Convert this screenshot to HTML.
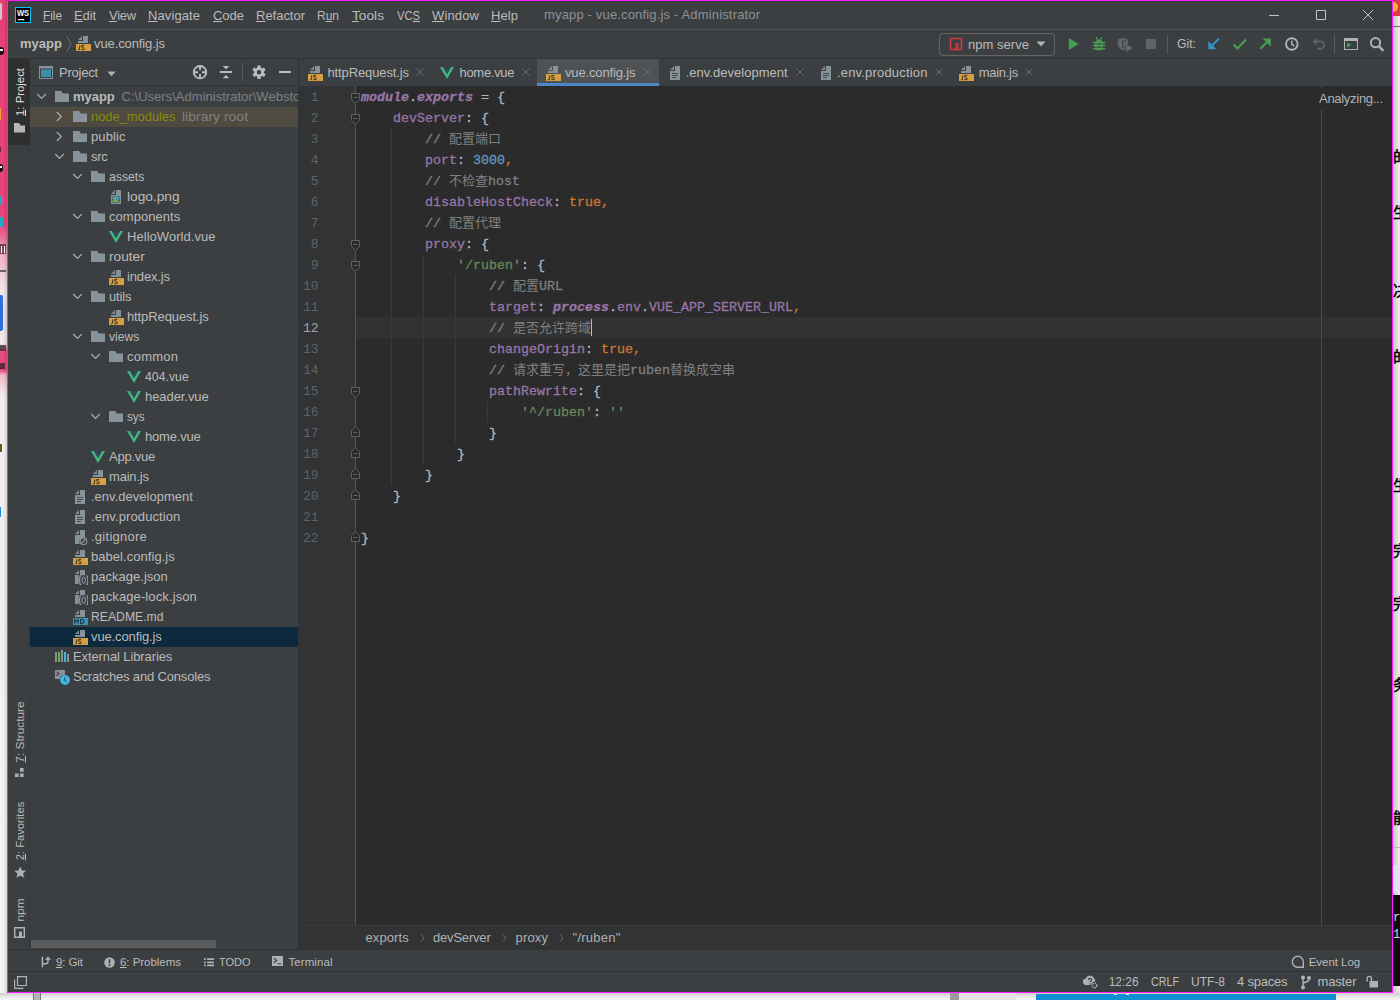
<!DOCTYPE html>
<html lang="en"><head><meta charset="utf-8"><title>myapp - vue.config.js - Administrator</title>
<style>

html,body{margin:0;padding:0}
body{width:1400px;height:1000px;overflow:hidden;position:relative;background:#fff;
 font-family:"Liberation Sans",sans-serif;font-size:13px;color:#bbb}
#win{position:absolute;left:0;top:0;width:1400px;height:1000px}
.r{position:absolute}
.i{position:absolute;overflow:visible}
.t{position:absolute;white-space:nowrap;line-height:16px;height:16px;color:#bbb}
.t u{text-decoration:underline;text-underline-offset:1px}
.code{position:absolute;white-space:pre;font-family:"Liberation Mono",monospace;font-size:13.33px;
 line-height:21px;height:21px;color:#a9b7c6;left:361px;-webkit-text-stroke:.3px}
.ln{position:absolute;left:298px;width:20.500px;text-align:right;font-family:"Liberation Mono",monospace;
 font-size:13px;line-height:21px;height:21px;color:#606366}
.p{color:#9876aa}.k{color:#cc7832}.n{color:#6897bb}.s{color:#6a8759}.c{color:#808080}
.g{color:#9876aa;font-style:italic;font-weight:bold}
.cj{display:inline-block;vertical-align:top;height:21px;line-height:21px;color:#808080;overflow:visible;
 font-family:"Liberation Mono","Noto Sans CJK SC",monospace;font-size:13px;-webkit-text-stroke:0}
</style></head>
<body>
<svg width="0" height="0" style="position:absolute"><defs>
<symbol id="f-txt" viewBox="0 0 16 16"><path fill="#87939a" d="M8 1h5v14h-10v-9h5z"/><path fill="#87939a" opacity=".9" d="M7 1v4h-4z"/><path stroke="#3c3f41" stroke-width="1" opacity=".85" d="M5 8.5h6M5 10.5h6M5 12.5h4"/></symbol>
<symbol id="f-js" viewBox="0 0 16 16"><path fill="#87939a" d="M8 1h5v7h-10v-2h5z"/><path fill="#87939a" opacity=".9" d="M7 1v4h-4z"/><rect x="1" y="9" width="15" height="7" fill="#d6a042"/><path fill="none" stroke="#4a3c1f" stroke-width="1.1" d="M4.6 10.4v3.2q0 1.1-1.1 1.1h-.7M9.2 10.9q-.5-.5-1.4-.5-1.3 0-1.3.95 0 .8 1.3 1.1 1.4.3 1.4 1.2 0 1-1.4 1-1 0-1.5-.6"/></symbol>
<symbol id="f-md" viewBox="0 0 16 16"><path fill="#87939a" d="M8 1h5v7h-10v-2h5z"/><path fill="#87939a" opacity=".9" d="M7 1v4h-4z"/><rect x="1" y="9" width="15" height="7" fill="#3e93b8"/><path fill="none" stroke="#1d3a48" stroke-width="1.1" d="M2.7 14.7v-4.2l1.7 2.4 1.7-2.4v4.2M8.6 10.5v4.2h1.2q2 0 2-2.1t-2-2.1z"/></symbol>
<symbol id="f-json" viewBox="0 0 16 16"><path fill="#87939a" d="M8 1h5v5.200h-6.300v8.800h-3.700v-9h5z"/><path fill="#87939a" opacity=".9" d="M7 1v4h-4z"/><path fill="none" stroke="#98a3aa" stroke-width="1.100" d="M9.200 6.800q-1.400 0-1.400 1.300v1.700q0 1.300-1 1.400 1 .1 1 1.400v1.700q0 1.300 1.400 1.300M14.300 6.800q1.400 0 1.400 1.300v1.700q0 1.300 1 1.400-1 .1-1 1.400v1.700q0 1.300-1.400 1.300"/><ellipse cx="11.750" cy="11.200" rx="1.700" ry="3.300" fill="none" stroke="#98a3aa" stroke-width="1"/></symbol>
<symbol id="f-ign" viewBox="0 0 16 16"><path fill="#87939a" d="M8 1h5v8.200a4 4 0 0 0-5 5.800h-5v-9h5z"/><path fill="#87939a" opacity=".9" d="M7 1v4h-4z"/><circle cx="11.500" cy="12.200" r="3.300" fill="none" stroke="#87939a" stroke-width="1.1"/><path stroke="#87939a" stroke-width="1.1" d="M9.300 14.400l4.400-4.400"/></symbol>
<symbol id="f-img" viewBox="0 0 16 16"><path fill="#87939a" d="M8 1h5v14h-10v-9h5z"/><path fill="#87939a" opacity=".9" d="M7 1v4h-4z"/><rect x="4.5" y="7.5" width="7" height="6" fill="#3c3f41"/><rect x="5" y="8" width="6" height="2.6" fill="#40a8d0"/><path fill="#62b543" d="M5 13v-2l2-1.2 4 2.2v1z"/></symbol>
<symbol id="f-vue" viewBox="0 0 16 16"><path fill="#41b883" d="M1 3h2.9l4.1 7.1 4.1-7.1h2.9l-7 12z"/><path fill="#35495e" d="M3.9 3h2.4l1.7 3 1.7-3h2.4l-4.1 7.1z"/></symbol>
<symbol id="folder" viewBox="0 0 16 16"><path fill="#87939a" d="M1 3h6.2l1.6 2.6h6.2v8.400h-14z"/></symbol>
<symbol id="libs" viewBox="0 0 16 16"><path fill="#87939a" d="M1 3h2v10h-2zM7 1h2v12h-2zM13 5h2v8h-2z"/><path fill="#62b543" d="M4 3h2v10h-2z"/><path fill="#40b6e0" d="M10 3h2v10h-2z"/></symbol>
<symbol id="scratch" viewBox="0 0 16 16"><path fill="#87939a" d="M1 1h10v4.800a5.300 5.300 0 0 0-5.200 4.200h-4.800z"/><path fill="none" stroke="#3c3f41" stroke-width="1.100" d="M2.500 2.700l2.500 2-2.500 2"/><circle cx="11" cy="11" r="4.900" fill="#40b6e0"/><path fill="none" stroke="#2b4a5a" stroke-width="1.200" d="M10.800 8.500v2.600l1.600 1.500"/></symbol>
<symbol id="ch-d" viewBox="0 0 16 16"><path fill="none" stroke="#adadad" stroke-width="1.2" d="M3.200 6l4.300 4.300 4.300-4.300"/></symbol>
<symbol id="ch-r" viewBox="0 0 16 16"><path fill="none" stroke="#adadad" stroke-width="1.2" d="M4.800 4l4.500 4.500-4.500 4.500"/></symbol>
</defs></svg>
<!-- desktop peeking out behind the IDE window -->
<div class="r" style="left:0px;top:0px;width:7px;height:1000px;background:#f3f3f3;background:linear-gradient(90deg,rgba(0,0,0,0) 45%,rgba(0,0,0,.12) 100%),linear-gradient(180deg,#ea3f79 0,#e8457d 225px,#ec7aa0 240px,#f2b4c8 256px,#f1e6ea 290px,#f1e6ea 344px,#e84a80 352px,#e84a80 370px,#f0b8c8 375px,#f2eeee 396px,#f3f3f3 100%)"></div>
<div class="r" style="left:0px;top:3px;width:2px;height:17px;background:#cfc8cb;border-radius:0 2px 2px 0"></div>
<div class="r" style="left:0px;top:47px;width:4px;height:8px;background:#1c1014;border-radius:0 3px 3px 0"></div>
<div class="r" style="left:0px;top:49px;width:3px;height:2px;background:#f4ecee;"></div>
<div class="r" style="left:0px;top:164px;width:3px;height:8px;background:#1c1014;border-radius:0 3px 3px 0"></div>
<div class="r" style="left:0px;top:166px;width:2px;height:2px;background:#f4ecee;"></div>
<div class="r" style="left:0px;top:108px;width:1px;height:12px;background:#f2a02c;"></div>
<div class="r" style="left:0px;top:147px;width:1px;height:5px;background:#7a2848;"></div>
<div class="r" style="left:0px;top:196px;width:2px;height:9px;background:#28a8c4;"></div>
<div class="r" style="left:0px;top:217px;width:3px;height:10px;background:#28a8c4;"></div>
<div class="r" style="left:0px;top:244px;width:6px;height:10px;background:#2a1a20;opacity:.65"></div>
<div class="r" style="left:1px;top:246px;width:1px;height:7px;background:#fff;"></div>
<div class="r" style="left:4px;top:246px;width:1px;height:7px;background:#fff;"></div>
<div class="r" style="left:0px;top:270px;width:6px;height:2px;background:#3a3036;opacity:.7"></div>
<div class="r" style="left:0px;top:295px;width:3px;height:36px;background:#2f6fe0;border-radius:0 2px 2px 0"></div>
<div class="r" style="left:0px;top:345px;width:6px;height:6px;background:#2a2024;opacity:.7"></div>
<div class="r" style="left:0px;top:363px;width:5px;height:6px;background:#2a1a20;opacity:.7"></div>
<div class="r" style="left:0px;top:444px;width:2px;height:8px;background:#6a5420;"></div>
<div class="r" style="left:0px;top:507px;width:1px;height:10px;background:#1a8fd8;"></div>
<div class="r" style="left:1393px;top:0px;width:7px;height:1000px;background:#e6e6e6;background:linear-gradient(90deg,#c6c6c6,#efefef)"></div>
<div class="r" style="left:1393px;top:0px;width:7px;height:16px;background:#e1344b;"></div>
<div class="r" style="left:1393px;top:2px;width:5px;height:10px;background:#f0b428;border-radius:0 5px 5px 0"></div>
<div class="r" style="left:1393px;top:26px;width:7px;height:1px;background:#6e6e6e;"></div>
<svg class="i" style="left:1393px;top:149px;overflow:hidden" width="7" height="16" viewBox="0 0 7 16" fill="#000" stroke="#000" stroke-width="0.5"><text x="0" y="13.200" font-size="15" font-family="'Liberation Sans','Noto Sans CJK SC',sans-serif">的</text></svg>
<svg class="i" style="left:1393px;top:205px;overflow:hidden" width="7" height="16" viewBox="0 0 7 16" fill="#000" stroke="#000" stroke-width="0.5"><text x="0" y="13.200" font-size="15" font-family="'Liberation Sans','Noto Sans CJK SC',sans-serif">生</text></svg>
<svg class="i" style="left:1393px;top:283px;overflow:hidden" width="7" height="16" viewBox="0 0 7 16" fill="#000" stroke="#000" stroke-width="0.5"><text x="0" y="13.200" font-size="15" font-family="'Liberation Sans','Noto Sans CJK SC',sans-serif">决</text></svg>
<svg class="i" style="left:1393px;top:349px;overflow:hidden" width="7" height="16" viewBox="0 0 7 16" fill="#000" stroke="#000" stroke-width="0.5"><text x="0" y="13.200" font-size="15" font-family="'Liberation Sans','Noto Sans CJK SC',sans-serif">的</text></svg>
<svg class="i" style="left:1393px;top:478px;overflow:hidden" width="7" height="16" viewBox="0 0 7 16" fill="#000" stroke="#000" stroke-width="0.5"><text x="0" y="13.200" font-size="15" font-family="'Liberation Sans','Noto Sans CJK SC',sans-serif">生</text></svg>
<svg class="i" style="left:1393px;top:543px;overflow:hidden" width="7" height="16" viewBox="0 0 7 16" fill="#000" stroke="#000" stroke-width="0.5"><text x="0" y="13.200" font-size="15" font-family="'Liberation Sans','Noto Sans CJK SC',sans-serif">完</text></svg>
<svg class="i" style="left:1393px;top:596px;overflow:hidden" width="7" height="16" viewBox="0 0 7 16" fill="#000" stroke="#000" stroke-width="0.5"><text x="0" y="13.200" font-size="15" font-family="'Liberation Sans','Noto Sans CJK SC',sans-serif">完</text></svg>
<svg class="i" style="left:1393px;top:677px;overflow:hidden" width="7" height="16" viewBox="0 0 7 16" fill="#000" stroke="#000" stroke-width="0.5"><text x="0" y="13.200" font-size="15" font-family="'Liberation Sans','Noto Sans CJK SC',sans-serif">务</text></svg>
<svg class="i" style="left:1393px;top:810px;overflow:hidden" width="7" height="16" viewBox="0 0 7 16" fill="#000" stroke="#000" stroke-width="0.5"><text x="0" y="13.200" font-size="15" font-family="'Liberation Sans','Noto Sans CJK SC',sans-serif">能</text></svg>
<div class="r" style="left:1393px;top:847px;width:7px;height:1px;background:#b8b8b8;"></div>
<div class="r" style="left:1393px;top:865px;width:7px;height:27px;background:#dfe3f4;"></div>
<div class="r" style="left:1393px;top:895px;width:7px;height:91px;background:#0c0c0c;"></div>
<div class="t" style="left:1393px;top:910px;width:7px;overflow:hidden;color:#d8d8d8;font-family:'Liberation Mono',monospace;font-size:12px">ra</div>
<div class="t" style="left:1393px;top:927px;width:7px;overflow:hidden;color:#d8d8d8;font-family:'Liberation Mono',monospace;font-size:12px">10</div>
<div class="r" style="left:0px;top:993px;width:1400px;height:7px;background:#f2f2f2;background:linear-gradient(180deg,#cfcfcf,#f4f4f4 85%)"></div>
<div class="r" style="left:33px;top:993px;width:8px;height:7px;background:#b4b4bc;border-left:1px solid #777;border-right:1px solid #777;box-sizing:border-box"></div>
<div class="r" style="left:950px;top:993px;width:9px;height:7px;background:#9c9c9c;"></div>
<div class="r" style="left:959px;top:993px;width:57px;height:7px;background:#e2e2e6;"></div>
<div class="r" style="left:1036px;top:994px;width:300px;height:6px;background:#0f90d3;"></div>
<div class="r" style="left:1114px;top:994px;width:3px;height:1px;background:#e8f4fb;"></div>
<div class="r" style="left:1126px;top:994px;width:3px;height:1px;background:#e8f4fb;"></div>
<div class="r" style="left:7px;top:0px;width:1386px;height:993px;background:#3c3f41;border:1px solid #ff19ff;box-sizing:border-box"></div>
<div id="win">
<!-- title / menu bar -->
<svg class="i" style="left:15px;top:7px" width="16" height="16" viewBox="0 0 16 16"><rect x=".5" y=".5" width="15" height="15" fill="#000" stroke="#08c3f2"/><text x="1.900" y="9.200" font-family="Liberation Sans,sans-serif" font-weight="bold" font-size="8.800" textLength="12.200" lengthAdjust="spacingAndGlyphs" fill="#fff">WS</text><path fill="#fff" d="M2.900 11.900h6.300v1.300h-6.300z"/></svg>
<div class="t" style="left:43px;top:7.5px;transform:scaleX(0.907);transform-origin:0 50%;"><u>F</u>ile</div>
<div class="t" style="left:74px;top:7.5px;letter-spacing:-0.13px;"><u>E</u>dit</div>
<div class="t" style="left:109px;top:7.5px;letter-spacing:-0.31px;"><u>V</u>iew</div>
<div class="t" style="left:148px;top:7.5px;letter-spacing:0.10px;"><u>N</u>avigate</div>
<div class="t" style="left:213px;top:7.5px;letter-spacing:-0.03px;"><u>C</u>ode</div>
<div class="t" style="left:256px;top:7.5px;letter-spacing:-0.02px;"><u>R</u>efactor</div>
<div class="t" style="left:317px;top:7.5px;transform:scaleX(0.922);transform-origin:0 50%;">R<u>u</u>n</div>
<div class="t" style="left:352px;top:7.5px;transform:scaleX(1.054);transform-origin:0 50%;"><u>T</u>ools</div>
<div class="t" style="left:397px;top:7.5px;transform:scaleX(0.860);transform-origin:0 50%;">VC<u>S</u></div>
<div class="t" style="left:432px;top:7.5px;letter-spacing:0.15px;"><u>W</u>indow</div>
<div class="t" style="left:491px;top:7.5px;letter-spacing:0.09px;"><u>H</u>elp</div>
<div class="t" style="left:544px;top:7px;color:#8f9193;letter-spacing:0.16px;">myapp - vue.config.js - Administrator</div>
<svg class="i" style="left:1262px;top:4px" width="120" height="22" viewBox="0 0 120 22" fill="none" stroke="#c4c4c4" stroke-width="1"><path d="M7 11.500h10M54.500 6.500h9v9h-9zM101 6l10 10M111 6l-10 10"/></svg>
<div class="r" style="left:8px;top:29px;width:1384px;height:1px;background:#515456;"></div>
<!-- navigation bar + main toolbar -->
<div class="t" style="left:20px;top:36px;font-weight:bold;letter-spacing:0.02px;">myapp</div>
<svg class="i" style="left:65px;top:35px" width="8" height="18" viewBox="0 0 8 18" fill="none" stroke="#6b6e70" stroke-width="1"><path d="M1.500 1l4.500 8-4.500 8"/></svg>
<svg class="i" style="left:75px;top:35px;" width="16" height="16"><use href="#f-js"/></svg>
<div class="t" style="left:94px;top:36px;letter-spacing:-0.11px;">vue.config.js</div>
<div class="r" style="left:939px;top:33px;width:116px;height:23px;background:transparent;border:1px solid #646464;border-radius:4px;box-sizing:border-box"></div>
<svg class="i" style="left:949px;top:37px" width="14" height="14" viewBox="0 0 14 14"><path fill="none" stroke="#d8373f" stroke-width="1.600" d="M1.500 1.500h11v11h-11z"/><path fill="#d8373f" d="M6.500 6h3v7h-3z" opacity=".9"/></svg>
<div class="t" style="left:968px;top:37px;letter-spacing:0.04px;">npm serve</div>
<svg class="i" style="left:1036px;top:41px" width="10" height="6" viewBox="0 0 10 6"><path fill="#b4b4b4" d="M.5.500h9l-4.500 5z"/></svg>
<svg class="i" style="left:1064px;top:36px" width="100" height="17" viewBox="0 0 100 17"><path fill="#499c54" d="M4.800 2l9.800 6-9.800 6z"/><g fill="#499c54" stroke="#499c54"><rect x="31.200" y="3.800" width="7.600" height="10.800" rx="3.800" stroke="none"/><path stroke-width="1.500" d="M28.800 6.400h12.400M28.800 9.600h12.400M28.800 12.800h12.400"/><path stroke-width="1.300" fill="none" d="M32 1.300l2 2.500M38 1.300l-2 2.500"/></g><path stroke="#3c3f41" stroke-width="1" d="M32.400 8h5.200M32.400 11.200h5.200"/><path fill="#636567" d="M53.700 3.500l5.200-1.700 5.100 1.700v4.200l-2.800 1.600v3.800l-2.300 1.400q-5.200-2.400-5.200-7.700z"/><path fill="none" stroke="#3c3f41" stroke-width="1.200" d="M62 4.900h-1.600q-1.700 0-1.700 1.700v3.300q0 1.700 1.300 1.700"/><path fill="#636567" d="M62 8l7 4-7 4z"/><rect x="82" y="3" width="10" height="10" fill="#606264"/></svg>
<div class="r" style="left:1167px;top:35px;width:1px;height:19px;background:#5a5d5f;"></div>
<div class="t" style="left:1177px;top:35.5px;transform:scaleX(0.939);transform-origin:0 50%;">Git:</div>
<svg class="i" style="left:1206px;top:36px" width="122" height="16" viewBox="0 0 122 16" fill="none" stroke-width="2"><path stroke="#3592c4" d="M12.800 2.800l-7.500 7.500"/><path fill="#3592c4" d="M2.300 13.200v-8.200l8.200 8.200z"/><path stroke="#499c54" stroke-width="2.200" d="M27.500 8.500l4 4 8.500-9"/><path stroke="#499c54" d="M54.300 12.800l7.500-7.500"/><path fill="#499c54" d="M64.800 2.400v8.200l-8.200-8.200z"/><circle cx="85.800" cy="8" r="5.800" stroke="#afb1b3" stroke-width="1.900"/><path stroke="#afb1b3" stroke-width="1.500" d="M85.800 4.500v3.800l2.600 1.700"/><path stroke="#5f6163" stroke-width="1.900" d="M108.500 5.500h6a3.600 3.600 0 0 1 0 7.200h-3.500"/><path fill="#5f6163" d="M106.300 5.500l4.500-4v8z"/></svg>
<div class="r" style="left:1334px;top:35px;width:1px;height:19px;background:#5a5d5f;"></div>
<svg class="i" style="left:1343px;top:36px" width="16" height="16" viewBox="0 0 16 16"><path fill="#afb1b3" d="M1 2h14v12h-14zM2 5v8h12v-8z" fill-rule="evenodd"/><path fill="#499c54" d="M4 6.200l4.500 2.800-4.500 2.800z"/></svg>
<svg class="i" style="left:1368px;top:35px" width="18" height="18" viewBox="0 0 18 18" fill="none" stroke="#afb1b3"><circle cx="7.500" cy="7.700" r="4.600" stroke-width="2"/><path stroke-width="2.400" d="M10.800 11.200l4.600 4.600"/></svg>
<div class="r" style="left:8px;top:58px;width:1384px;height:1px;background:#323232;"></div>
<!-- left tool-window stripe -->
<div class="r" style="left:8px;top:59px;width:22px;height:890px;background:#3c3f41;"></div>
<div class="r" style="left:8px;top:59px;width:22px;height:86px;background:#2d2f30;"></div>
<div class="r" style="left:29px;top:145px;width:1px;height:804px;background:#36383a;"></div>
<div class="t" style="left:20px;top:92px;width:0;height:0;overflow:visible;font-size:11.500px;color:#e0e0e0"><div style="position:absolute;transform:translate(-50%,-50%) rotate(-90deg) scaleX(0.988);white-space:nowrap;line-height:16px"><u>1</u>: Project</div></div>
<svg class="i" style="left:14px;top:123px" width="11" height="9.500" viewBox="0 0 11 9.500"><path fill="#b4b6b8" d="M0 0h5l1.500 2.500h4.500v7h-11z"/></svg>
<div class="t" style="left:20px;top:731.5px;width:0;height:0;overflow:visible;font-size:11.500px;color:#bbb"><div style="position:absolute;transform:translate(-50%,-50%) rotate(-90deg) scaleX(1.031);white-space:nowrap;line-height:16px"><u>7</u>: Structure</div></div>
<svg class="i" style="left:15px;top:767.500px" width="10" height="10" viewBox="0 0 11 11" fill="#afb1b3"><path d="M5.500 0h4v4h-4zM0 6h4v4h-4zM5.500 6h4v4h-4z"/></svg>
<div class="t" style="left:20px;top:831px;width:0;height:0;overflow:visible;font-size:11.500px;color:#bbb"><div style="position:absolute;transform:translate(-50%,-50%) rotate(-90deg) scaleX(0.974);white-space:nowrap;line-height:16px"><u>2</u>: Favorites</div></div>
<svg class="i" style="left:13.500px;top:865.500px" width="12.500" height="12.500" viewBox="0 0 14 14"><path fill="#afb1b3" d="M7 .5l2 4.500 4.700.4-3.600 3.100 1.100 4.700-4.200-2.500-4.200 2.500 1.100-4.700-3.600-3.100 4.700-.4z"/></svg>
<div class="t" style="left:20px;top:909.5px;width:0;height:0;overflow:visible;font-size:11.500px;color:#bbb"><div style="position:absolute;transform:translate(-50%,-50%) rotate(-90deg) scaleX(1.028);white-space:nowrap;line-height:16px">npm</div></div>
<svg class="i" style="left:14px;top:927px" width="11" height="11" viewBox="0 0 11 11"><path fill="none" stroke="#afb1b3" stroke-width="1.400" d="M.7.700h9.600v9.600h-9.600z"/><path fill="#afb1b3" d="M5 4.500h3v6h-3z"/></svg>
<!-- project tool window -->
<div class="r" style="left:30px;top:59px;width:268px;height:891px;background:#3c3f41;"></div>
<svg class="i" style="left:39px;top:66px" width="14" height="13" viewBox="0 0 14 13"><path fill="#87939a" d="M0 0h14v13h-14z"/><path fill="#3c3f41" d="M1 2.500h12v9.500h-12z"/><path fill="#3d8eae" d="M2 3.500h10v7.500h-10z"/></svg>
<div class="t" style="left:59px;top:65px;letter-spacing:-0.24px;">Project</div>
<svg class="i" style="left:107px;top:71px" width="9" height="6" viewBox="0 0 9 6"><path fill="#b4b4b4" d="M.3.500h8.400l-4.200 4.800z"/></svg>
<svg class="i" style="left:192px;top:64px" width="16" height="16" viewBox="0 0 16 16" fill="none" stroke="#b9bbbd" stroke-width="1.900"><circle cx="8" cy="8.200" r="6.200"/><path d="M8 2.500v3.800M8 10.100v3.800M2.300 8.200h3.800M9.900 8.200h3.800"/></svg>
<svg class="i" style="left:219px;top:64px" width="14" height="16" viewBox="0 0 14 16"><path fill="#b9bbbd" d="M.8 7h12.400v2h-12.400zM3.700 2h6.600l-3.300 3.300zM3.700 14.200h6.600l-3.300-3.300z"/></svg>
<div class="r" style="left:242px;top:62px;width:1px;height:20px;background:#555759;"></div>
<svg class="i" style="left:251px;top:64px" width="16" height="16" viewBox="0 0 16 16"><path fill="#b9bbbd" fill-rule="evenodd" d="M9.760 3.630L9.550 1.480L6.450 1.480L6.240 3.630L4.920 4.390L2.950 3.490L1.400 6.180L3.160 7.430L3.160 8.970L1.400 10.220L2.950 12.910L4.920 12.010L6.240 12.770L6.450 14.920L9.550 14.920L9.760 12.770L11.080 12.010L13.050 12.910L14.600 10.220L12.840 8.970L12.840 7.430L14.600 6.180L13.050 3.490L11.080 4.390zM10.200 8.200a2.200 2.200 0 1 0 -4.400 0a2.200 2.200 0 1 0 4.400 0z"/></svg>
<div class="r" style="left:279px;top:71px;width:12px;height:2px;background:#b9bbbd;"></div>
<div class="r" style="left:30px;top:85px;width:268px;height:1px;background:#323232;"></div>
<svg class="i" style="left:34px;top:88px;" width="16" height="16"><use href="#ch-d"/></svg>
<svg class="i" style="left:54px;top:88px;" width="16" height="16"><use href="#folder"/></svg>
<div class="t" style="left:73px;top:89px;font-weight:bold;letter-spacing:-0.03px;">myapp</div>
<div class="t" style="left:121.5px;top:89px;width:176px;overflow:hidden;color:#7e8183;letter-spacing:.02px">C:\Users\Administrator\WebstormProjects\myapp</div>
<div class="r" style="left:30px;top:107px;width:268px;height:20px;background:#4f4b41;"></div>
<svg class="i" style="left:52px;top:108px;" width="16" height="16"><use href="#ch-r"/></svg>
<svg class="i" style="left:72px;top:108px;" width="16" height="16"><use href="#folder"/></svg>
<div class="t" style="left:91px;top:109px;color:#878a0c;letter-spacing:-0.07px;">node_modules</div>
<div class="t" style="left:182px;top:109px;color:#7e8183;transform:scaleX(1.075);transform-origin:0 50%;">library root</div>
<svg class="i" style="left:52px;top:128px;" width="16" height="16"><use href="#ch-r"/></svg>
<svg class="i" style="left:72px;top:128px;" width="16" height="16"><use href="#folder"/></svg>
<div class="t" style="left:91px;top:129px;letter-spacing:0.11px;">public</div>
<svg class="i" style="left:52px;top:148px;" width="16" height="16"><use href="#ch-d"/></svg>
<svg class="i" style="left:72px;top:148px;" width="16" height="16"><use href="#folder"/></svg>
<div class="t" style="left:91px;top:149px;letter-spacing:-0.26px;">src</div>
<svg class="i" style="left:70px;top:168px;" width="16" height="16"><use href="#ch-d"/></svg>
<svg class="i" style="left:90px;top:168px;" width="16" height="16"><use href="#folder"/></svg>
<div class="t" style="left:109px;top:169px;transform:scaleX(0.940);transform-origin:0 50%;">assets</div>
<svg class="i" style="left:108px;top:189px;" width="16" height="16"><use href="#f-img"/></svg>
<div class="t" style="left:127px;top:189px;transform:scaleX(1.053);transform-origin:0 50%;">logo.png</div>
<svg class="i" style="left:70px;top:208px;" width="16" height="16"><use href="#ch-d"/></svg>
<svg class="i" style="left:90px;top:208px;" width="16" height="16"><use href="#folder"/></svg>
<div class="t" style="left:109px;top:209px;letter-spacing:0.05px;">components</div>
<svg class="i" style="left:108px;top:228px;" width="16" height="16"><use href="#f-vue"/></svg>
<div class="t" style="left:127px;top:229px;letter-spacing:0.05px;">HelloWorld.vue</div>
<svg class="i" style="left:70px;top:248px;" width="16" height="16"><use href="#ch-d"/></svg>
<svg class="i" style="left:90px;top:248px;" width="16" height="16"><use href="#folder"/></svg>
<div class="t" style="left:109px;top:249px;transform:scaleX(1.054);transform-origin:0 50%;">router</div>
<svg class="i" style="left:108px;top:269px;" width="16" height="16"><use href="#f-js"/></svg>
<div class="t" style="left:127px;top:269px;letter-spacing:-0.15px;">index.js</div>
<svg class="i" style="left:70px;top:288px;" width="16" height="16"><use href="#ch-d"/></svg>
<svg class="i" style="left:90px;top:288px;" width="16" height="16"><use href="#folder"/></svg>
<div class="t" style="left:109px;top:289px;letter-spacing:-0.15px;">utils</div>
<svg class="i" style="left:108px;top:309px;" width="16" height="16"><use href="#f-js"/></svg>
<div class="t" style="left:127px;top:309px;letter-spacing:-0.11px;">httpRequest.js</div>
<svg class="i" style="left:70px;top:328px;" width="16" height="16"><use href="#ch-d"/></svg>
<svg class="i" style="left:90px;top:328px;" width="16" height="16"><use href="#folder"/></svg>
<div class="t" style="left:109px;top:329px;transform:scaleX(0.932);transform-origin:0 50%;">views</div>
<svg class="i" style="left:88px;top:348px;" width="16" height="16"><use href="#ch-d"/></svg>
<svg class="i" style="left:108px;top:348px;" width="16" height="16"><use href="#folder"/></svg>
<div class="t" style="left:127px;top:349px;letter-spacing:0.23px;">common</div>
<svg class="i" style="left:126px;top:368px;" width="16" height="16"><use href="#f-vue"/></svg>
<div class="t" style="left:145px;top:369px;transform:scaleX(0.945);transform-origin:0 50%;">404.vue</div>
<svg class="i" style="left:126px;top:388px;" width="16" height="16"><use href="#f-vue"/></svg>
<div class="t" style="left:145px;top:389px;letter-spacing:-0.07px;">header.vue</div>
<svg class="i" style="left:88px;top:408px;" width="16" height="16"><use href="#ch-d"/></svg>
<svg class="i" style="left:108px;top:408px;" width="16" height="16"><use href="#folder"/></svg>
<div class="t" style="left:127px;top:409px;transform:scaleX(0.897);transform-origin:0 50%;">sys</div>
<svg class="i" style="left:126px;top:428px;" width="16" height="16"><use href="#f-vue"/></svg>
<div class="t" style="left:145px;top:429px;letter-spacing:-0.20px;">home.vue</div>
<svg class="i" style="left:90px;top:448px;" width="16" height="16"><use href="#f-vue"/></svg>
<div class="t" style="left:109px;top:449px;letter-spacing:-0.23px;">App.vue</div>
<svg class="i" style="left:90px;top:469px;" width="16" height="16"><use href="#f-js"/></svg>
<div class="t" style="left:109px;top:469px;letter-spacing:-0.20px;">main.js</div>
<svg class="i" style="left:72px;top:489px;" width="16" height="16"><use href="#f-txt"/></svg>
<div class="t" style="left:91px;top:489px;letter-spacing:0.01px;">.env.development</div>
<svg class="i" style="left:72px;top:509px;" width="16" height="16"><use href="#f-txt"/></svg>
<div class="t" style="left:91px;top:509px;letter-spacing:0.10px;">.env.production</div>
<svg class="i" style="left:72px;top:529px;" width="16" height="16"><use href="#f-ign"/></svg>
<div class="t" style="left:91px;top:529px;letter-spacing:0.26px;">.gitignore</div>
<svg class="i" style="left:72px;top:549px;" width="16" height="16"><use href="#f-js"/></svg>
<div class="t" style="left:91px;top:549px;letter-spacing:0.05px;">babel.config.js</div>
<svg class="i" style="left:72px;top:569px;" width="16" height="16"><use href="#f-json"/></svg>
<div class="t" style="left:91px;top:569px;letter-spacing:0.02px;">package.json</div>
<svg class="i" style="left:72px;top:589px;" width="16" height="16"><use href="#f-json"/></svg>
<div class="t" style="left:91px;top:589px;letter-spacing:0.11px;">package-lock.json</div>
<svg class="i" style="left:72px;top:609px;" width="16" height="16"><use href="#f-md"/></svg>
<div class="t" style="left:91px;top:609px;transform:scaleX(0.938);transform-origin:0 50%;">README.md</div>
<div class="r" style="left:30px;top:627px;width:268px;height:20px;background:#0d293e;"></div>
<svg class="i" style="left:72px;top:629px;" width="16" height="16"><use href="#f-js"/></svg>
<div class="t" style="left:91px;top:629px;letter-spacing:-0.12px;">vue.config.js</div>
<svg class="i" style="left:54px;top:649px;" width="16" height="16"><use href="#libs"/></svg>
<div class="t" style="left:73px;top:649px;letter-spacing:-0.11px;">External Libraries</div>
<svg class="i" style="left:54px;top:669px;" width="16" height="16"><use href="#scratch"/></svg>
<div class="t" style="left:73px;top:669px;letter-spacing:-0.16px;">Scratches and Consoles</div>
<div class="r" style="left:31px;top:940px;width:185px;height:8px;background:#595b5d;"></div>
<div class="r" style="left:298px;top:59px;width:1px;height:891px;background:#323232;"></div>
<!-- editor tabs -->
<div class="r" style="left:299px;top:59px;width:1093px;height:27px;background:#3c3f41;"></div>
<div class="r" style="left:537px;top:59px;width:122px;height:27px;background:#4e5254;"></div>
<div class="r" style="left:537px;top:83px;width:122px;height:3px;background:#4a88c7;"></div>
<svg class="i" style="left:307px;top:65px;" width="16" height="16"><use href="#f-js"/></svg>
<div class="t" style="left:327.5px;top:65px;letter-spacing:-0.12px;">httpRequest.js</div>
<svg class="i" style="left:416px;top:68px" width="8" height="8" viewBox="0 0 8 8"><path stroke="#686b6d" stroke-width="1" fill="none" d="M.5.500l7 7M7.500.500l-7 7"/></svg>
<svg class="i" style="left:438.5px;top:64px;" width="16" height="16"><use href="#f-vue"/></svg>
<div class="t" style="left:459.5px;top:65px;letter-spacing:-0.30px;">home.vue</div>
<svg class="i" style="left:522px;top:68px" width="8" height="8" viewBox="0 0 8 8"><path stroke="#686b6d" stroke-width="1" fill="none" d="M.5.500l7 7M7.500.500l-7 7"/></svg>
<svg class="i" style="left:545px;top:65px;" width="16" height="16"><use href="#f-js"/></svg>
<div class="t" style="left:565px;top:65px;letter-spacing:-0.15px;">vue.config.js</div>
<svg class="i" style="left:643px;top:68px" width="8" height="8" viewBox="0 0 8 8"><path stroke="#686b6d" stroke-width="1" fill="none" d="M.5.500l7 7M7.500.500l-7 7"/></svg>
<svg class="i" style="left:666.5px;top:65px;" width="16" height="16"><use href="#f-txt"/></svg>
<div class="t" style="left:685.7px;top:65px;letter-spacing:0.02px;">.env.development</div>
<svg class="i" style="left:795.5px;top:68px" width="8" height="8" viewBox="0 0 8 8"><path stroke="#686b6d" stroke-width="1" fill="none" d="M.5.500l7 7M7.500.500l-7 7"/></svg>
<svg class="i" style="left:818px;top:65px;" width="16" height="16"><use href="#f-txt"/></svg>
<div class="t" style="left:837px;top:65px;letter-spacing:0.18px;">.env.production</div>
<svg class="i" style="left:935px;top:68px" width="8" height="8" viewBox="0 0 8 8"><path stroke="#686b6d" stroke-width="1" fill="none" d="M.5.500l7 7M7.500.500l-7 7"/></svg>
<svg class="i" style="left:958px;top:65px;" width="16" height="16"><use href="#f-js"/></svg>
<div class="t" style="left:978.7px;top:65px;letter-spacing:-0.28px;">main.js</div>
<svg class="i" style="left:1025px;top:68px" width="8" height="8" viewBox="0 0 8 8"><path stroke="#686b6d" stroke-width="1" fill="none" d="M.5.500l7 7M7.500.500l-7 7"/></svg>
<div class="r" style="left:299px;top:85px;width:1093px;height:1px;background:#323232;opacity:.0"></div>
<!-- editor -->
<div class="r" style="left:299px;top:86px;width:1093px;height:839px;background:#2b2b2b;"></div>
<div class="r" style="left:299px;top:86px;width:56px;height:839px;background:#313335;"></div>
<div class="r" style="left:356px;top:317px;width:1036px;height:21px;background:#323232;"></div>
<div class="r" style="left:355px;top:86px;width:1px;height:839px;background:#555555;"></div>
<div class="r" style="left:1321px;top:86px;width:1px;height:839px;background:#4b4b4b;"></div>
<div class="r" style="left:391px;top:128px;width:1px;height:357px;background:#393939;"></div>
<div class="r" style="left:423px;top:254px;width:1px;height:210px;background:#393939;"></div>
<div class="r" style="left:455px;top:275px;width:1px;height:168px;background:#393939;"></div>
<div class="r" style="left:487px;top:401px;width:1px;height:21px;background:#393939;"></div>
<div class="ln" style="top:87px;">1</div>
<div class="ln" style="top:108px;">2</div>
<div class="ln" style="top:129px;">3</div>
<div class="ln" style="top:150px;">4</div>
<div class="ln" style="top:171px;">5</div>
<div class="ln" style="top:192px;">6</div>
<div class="ln" style="top:213px;">7</div>
<div class="ln" style="top:234px;">8</div>
<div class="ln" style="top:255px;">9</div>
<div class="ln" style="top:276px;">10</div>
<div class="ln" style="top:297px;">11</div>
<div class="ln" style="top:318px;color:#a4a3a3;">12</div>
<div class="ln" style="top:339px;">13</div>
<div class="ln" style="top:360px;">14</div>
<div class="ln" style="top:381px;">15</div>
<div class="ln" style="top:402px;">16</div>
<div class="ln" style="top:423px;">17</div>
<div class="ln" style="top:444px;">18</div>
<div class="ln" style="top:465px;">19</div>
<div class="ln" style="top:486px;">20</div>
<div class="ln" style="top:507px;">21</div>
<div class="ln" style="top:528px;">22</div>
<svg class="i" style="left:351px;top:93px" width="10" height="11" viewBox="0 0 10 11"><path fill="#2b2b2b" stroke="#5e6163" d="M.5.500h8v6l-4 4-4-4z"/><path stroke="#5e6163" d="M2.500 4.500h4"/></svg>
<svg class="i" style="left:351px;top:114px" width="10" height="11" viewBox="0 0 10 11"><path fill="#2b2b2b" stroke="#5e6163" d="M.5.500h8v6l-4 4-4-4z"/><path stroke="#5e6163" d="M2.500 4.500h4"/></svg>
<svg class="i" style="left:351px;top:240px" width="10" height="11" viewBox="0 0 10 11"><path fill="#2b2b2b" stroke="#5e6163" d="M.5.500h8v6l-4 4-4-4z"/><path stroke="#5e6163" d="M2.500 4.500h4"/></svg>
<svg class="i" style="left:351px;top:261px" width="10" height="11" viewBox="0 0 10 11"><path fill="#2b2b2b" stroke="#5e6163" d="M.5.500h8v6l-4 4-4-4z"/><path stroke="#5e6163" d="M2.500 4.500h4"/></svg>
<svg class="i" style="left:351px;top:387px" width="10" height="11" viewBox="0 0 10 11"><path fill="#2b2b2b" stroke="#5e6163" d="M.5.500h8v6l-4 4-4-4z"/><path stroke="#5e6163" d="M2.500 4.500h4"/></svg>
<svg class="i" style="left:351px;top:426px" width="10" height="11" viewBox="0 0 10 11"><path fill="#2b2b2b" stroke="#5e6163" d="M.5 10.500h8v-6l-4-4-4 4z"/><path stroke="#5e6163" d="M2.500 6.500h4"/></svg>
<svg class="i" style="left:351px;top:447px" width="10" height="11" viewBox="0 0 10 11"><path fill="#2b2b2b" stroke="#5e6163" d="M.5 10.500h8v-6l-4-4-4 4z"/><path stroke="#5e6163" d="M2.500 6.500h4"/></svg>
<svg class="i" style="left:351px;top:468px" width="10" height="11" viewBox="0 0 10 11"><path fill="#2b2b2b" stroke="#5e6163" d="M.5 10.500h8v-6l-4-4-4 4z"/><path stroke="#5e6163" d="M2.500 6.500h4"/></svg>
<svg class="i" style="left:351px;top:489px" width="10" height="11" viewBox="0 0 10 11"><path fill="#2b2b2b" stroke="#5e6163" d="M.5 10.500h8v-6l-4-4-4 4z"/><path stroke="#5e6163" d="M2.500 6.500h4"/></svg>
<svg class="i" style="left:351px;top:531px" width="10" height="11" viewBox="0 0 10 11"><path fill="#2b2b2b" stroke="#5e6163" d="M.5 10.500h8v-6l-4-4-4 4z"/><path stroke="#5e6163" d="M2.500 6.500h4"/></svg>
<div class="code" style="top:87px"><span class="g">module</span>.<span class="g">exports</span> = {</div>
<div class="code" style="top:108px">    <span class="p">devServer</span>: {</div>
<div class="code" style="top:129px">        <span class="c">// </span><span class="cj" style="width:52px">配置端口</span></div>
<div class="code" style="top:150px">        <span class="p">port</span>: <span class="n">3000</span><span class="k">,</span></div>
<div class="code" style="top:171px">        <span class="c">// </span><span class="cj" style="width:39px">不检查</span><span class="c">host</span></div>
<div class="code" style="top:192px">        <span class="p">disableHostCheck</span>: <span class="k">true,</span></div>
<div class="code" style="top:213px">        <span class="c">// </span><span class="cj" style="width:52px">配置代理</span></div>
<div class="code" style="top:234px">        <span class="p">proxy</span>: {</div>
<div class="code" style="top:255px">            <span class="s">'/ruben'</span>: {</div>
<div class="code" style="top:276px">                <span class="c">// </span><span class="cj" style="width:26px">配置</span><span class="c">URL</span></div>
<div class="code" style="top:297px">                <span class="p">target</span>: <span class="g">process</span>.<span class="p">env</span>.<span class="p">VUE_APP_SERVER_URL</span><span class="k">,</span></div>
<div class="code" style="top:318px">                <span class="c">// </span><span class="cj" style="width:78px">是否允许跨域</span></div>
<div class="code" style="top:339px">                <span class="p">changeOrigin</span>: <span class="k">true,</span></div>
<div class="code" style="top:360px">                <span class="c">// </span><span class="cj" style="width:117px">请求重写，这里是把</span><span class="c">ruben</span><span class="cj" style="width:65px">替换成空串</span></div>
<div class="code" style="top:381px">                <span class="p">pathRewrite</span>: {</div>
<div class="code" style="top:402px">                    <span class="s">'^/ruben'</span>: <span class="s">''</span></div>
<div class="code" style="top:423px">                }</div>
<div class="code" style="top:444px">            }</div>
<div class="code" style="top:465px">        }</div>
<div class="code" style="top:486px">    }</div>
<div class="code" style="top:507px"></div>
<div class="code" style="top:528px">}</div>
<div class="r" style="left:591px;top:319px;width:1px;height:17px;background:#bbbbbb;"></div>
<div class="r" style="left:1314px;top:88px;width:77px;height:22px;background:#2b2b2b;"></div>
<div class="t" style="left:1319px;top:90.5px;color:#b0b2b4;letter-spacing:-0.29px;">Analyzing...</div>
<div class="r" style="left:299px;top:925px;width:1093px;height:25px;background:#313335;"></div>
<div class="r" style="left:299px;top:925px;width:1093px;height:1px;background:#383a3c;"></div>
<div class="t" style="left:365.5px;top:930px;color:#afb1b3;letter-spacing:0.09px;">exports</div>
<div class="t" style="left:433px;top:930px;color:#afb1b3;letter-spacing:-0.19px;">devServer</div>
<div class="t" style="left:515.5px;top:930px;color:#afb1b3;letter-spacing:0.18px;">proxy</div>
<div class="t" style="left:572.5px;top:930px;color:#afb1b3;letter-spacing:0.27px;">"/ruben"</div>
<svg class="i" style="left:420px;top:934px" width="5" height="8" viewBox="0 0 5 8"><path fill="none" stroke="#6a6c6e" d="M1 .5l3 3.500-3 3.500"/></svg>
<svg class="i" style="left:502px;top:934px" width="5" height="8" viewBox="0 0 5 8"><path fill="none" stroke="#6a6c6e" d="M1 .5l3 3.500-3 3.500"/></svg>
<svg class="i" style="left:559px;top:934px" width="5" height="8" viewBox="0 0 5 8"><path fill="none" stroke="#6a6c6e" d="M1 .5l3 3.500-3 3.500"/></svg>
<!-- bottom tool stripe + status bar -->
<div class="r" style="left:8px;top:950px;width:1384px;height:22px;background:#3c3f41;"></div>
<div class="r" style="left:8px;top:949px;width:1384px;height:1px;background:#323232;"></div>
<div class="r" style="left:8px;top:971px;width:1384px;height:1px;background:#323232;"></div>
<svg class="i" style="left:40.500px;top:956px" width="10.500" height="12" viewBox="0 0 12 14"><path fill="none" stroke="#afb1b3" stroke-width="1.700" d="M1.500 1v12M1.500 9h4.500q2 0 2-2v-4"/><path fill="#afb1b3" d="M8 .5l3.500 4h-7z"/></svg>
<div class="t" style="left:56px;top:954px;font-size:11.5px;letter-spacing:-0.10px;"><u>9</u>: Git</div>
<svg class="i" style="left:104px;top:956.500px" width="11" height="11" viewBox="0 0 12 12"><circle cx="6" cy="6" r="5.700" fill="#afb1b3"/><path stroke="#3c3f41" stroke-width="1.700" d="M6 2.500v4.200M6 8v1.700"/></svg>
<div class="t" style="left:120px;top:954px;font-size:11.5px;letter-spacing:-0.04px;"><u>6</u>: Problems</div>
<svg class="i" style="left:203.500px;top:956.500px" width="10.500" height="10.500" viewBox="0 0 12 12" fill="#afb1b3"><path d="M0 1.500h2v2h-2zM3.500 1.500h8v2h-8zM0 5h2v2h-2zM3.500 5h8v2h-8zM0 8.500h2v2h-2zM3.500 8.500h8v2h-8z"/></svg>
<div class="t" style="left:219px;top:954px;font-size:11.5px;transform:scaleX(0.954);transform-origin:0 50%;">TODO</div>
<svg class="i" style="left:272px;top:956px" width="11" height="10" viewBox="0 0 12 11"><path fill="#afb1b3" d="M0 0h12v11h-12z"/><path fill="none" stroke="#3c3f41" stroke-width="1.300" d="M2 2.500l3 2.500-3 2.500M6 8.500h4"/></svg>
<div class="t" style="left:288.5px;top:954px;font-size:11.5px;letter-spacing:0.08px;">Terminal</div>
<svg class="i" style="left:1291px;top:955px" width="14" height="14" viewBox="0 0 14 14"><path fill="none" stroke="#afb1b3" stroke-width="1.400" d="M12.300 12.300h-5.800a5.500 5.500 0 1 1 5.800-5.500z"/></svg>
<div class="t" style="left:1308.7px;top:954px;font-size:11.5px;letter-spacing:-0.04px;">Event Log</div>
<svg class="i" style="left:14px;top:976px" width="13" height="13" viewBox="0 0 13 13"><path fill="none" stroke="#afb1b3" stroke-width="1.200" d="M3.500.600h8.900v8.900h-8.900zM.6 3.500v8.900h8.900"/></svg>
<svg class="i" style="left:1082px;top:975px" width="17" height="14" viewBox="0 0 17 14"><path fill="#afb1b3" d="M3.500 10a3.300 3.300 0 0 1 .3-6.500 4.600 4.600 0 0 1 8.800 1 2.800 2.800 0 0 1 1 1.800l-3.500 1-1 2.700z"/><circle cx="12.500" cy="10.500" r="2.300" fill="none" stroke="#afb1b3" stroke-width="1.500" stroke-dasharray="1.200 .8"/><path fill="none" stroke="#3c3f41" stroke-width="1.200" d="M6.300 4.800q.2-1.500 1.700-1.500 1.600 0 1.600 1.400 0 .8-.9 1.300-.7.4-.7 1.200M8 8.500v1"/></svg>
<div class="t" style="left:1108.7px;top:974px;font-size:12px;letter-spacing:-0.01px;">12:26</div>
<div class="t" style="left:1151px;top:974px;font-size:12px;transform:scaleX(0.894);transform-origin:0 50%;">CRLF</div>
<div class="t" style="left:1191px;top:974px;font-size:12px;">UTF-8</div>
<div class="t" style="left:1237px;top:974px;letter-spacing:-0.22px;">4 spaces</div>
<svg class="i" style="left:1300px;top:975px" width="12" height="15" viewBox="0 0 12 15" fill="none" stroke="#afb1b3" stroke-width="1.400"><path d="M3 3.500v9M3 10q0-2.500 3-3t3-3"/><circle cx="3" cy="2.500" r="1.300" fill="#afb1b3"/><circle cx="9" cy="3" r="1.300" fill="#afb1b3"/><circle cx="3" cy="12.500" r="1.300" fill="#afb1b3"/></svg>
<div class="t" style="left:1317.5px;top:974px;letter-spacing:-0.15px;">master</div>
<svg class="i" style="left:1366px;top:975px" width="13" height="13" viewBox="0 0 13 13"><path fill="#afb1b3" d="M3.500 6h8.500v6.500h-8.500z"/><path fill="none" stroke="#afb1b3" stroke-width="1.400" d="M1.200 6.500v-3a2.100 2.100 0 0 1 4.200 0v2.500"/></svg>
</div>
</body></html>
